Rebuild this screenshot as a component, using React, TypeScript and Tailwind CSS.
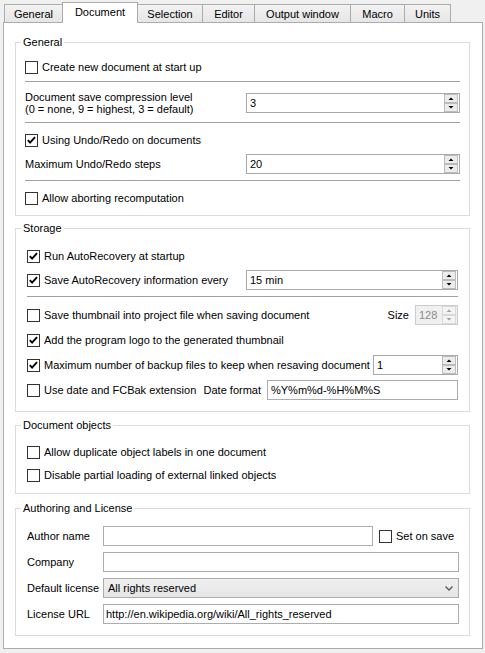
import React from 'react';

type CB = { checked?: boolean };
const Check = ({ checked }: CB) => (
  <span className="w-[13px] h-[13px] border border-[#333333] bg-white flex items-center justify-center shrink-0">
    {checked && (
      <svg width="11" height="11" viewBox="0 0 11 11">
        <path d="M1.8 5.2 L4.1 7.6 L9 2.2" fill="none" stroke="#000" strokeWidth="1.9" />
      </svg>
    )}
  </span>
);

const CheckRow = ({ label, checked, className = '' }: { label: string; checked?: boolean; className?: string }) => (
  <div className={'flex items-center gap-[4px] h-[20px] ' + className}>
    <Check checked={checked} />
    <span className="whitespace-nowrap">{label}</span>
  </div>
);

const SpinButtons = ({ disabled }: { disabled?: boolean }) => {
  const fill = disabled ? '#f4f4f4' : '#ececec';
  const stroke = disabled ? '#d9d9d9' : '#bcbcbc';
  const arrow = disabled ? '#a0a0a0' : '#000';
  return (
    <svg width="14" height="18" viewBox="0 0 14 18" className="shrink-0">
      <rect x="0.5" y="0.5" width="13" height="8" fill={fill} stroke={stroke} />
      <rect x="0.5" y="9.5" width="13" height="8" fill={fill} stroke={stroke} />
      <polygon points="4.5,6 9.5,6 7,3.5" fill={arrow} />
      <polygon points="4.5,12 9.5,12 7,14.5" fill={arrow} />
    </svg>
  );
};

const Spin = ({ value, className = '', disabled }: { value: string; className?: string; disabled?: boolean }) => (
  <div
    className={
      'h-[20px] border flex items-center pl-[3px] pr-[1px] shrink-0 ' +
      (disabled ? 'border-[#cccccc] bg-[#f0f0f0] text-[#8a8a8a] ' : 'border-[#a9a9a9] bg-white ') +
      className
    }
  >
    <span className="flex-1">{value}</span>
    <SpinButtons disabled={disabled} />
  </div>
);

const Input = ({ value = '', className = '' }: { value?: string; className?: string }) => (
  <div className={'h-[20px] border border-[#abadb3] bg-white flex items-center pl-[2px] whitespace-nowrap ' + className}>
    {value}
  </div>
);

const Sep = ({ className = '' }: { className?: string }) => <div className={'h-px bg-[#a0a0a0] ' + className} />;

const Group = ({ title, className = '', children }: { title: string; className?: string; children: React.ReactNode }) => (
  <div className={'relative border border-[#dcdcdc] flex flex-col shrink-0 ' + className}>
    <span className="absolute -top-[7px] left-[5px] px-[2px] bg-white leading-[13px]">{title}</span>
    {children}
  </div>
);

const tabs = [
  { label: 'General', w: 'w-[59px]' },
  { label: 'Document', w: 'w-[76px]', active: true },
  { label: 'Selection', w: 'w-[66px]' },
  { label: 'Editor', w: 'w-[53px]' },
  { label: 'Output window', w: 'w-[97px]' },
  { label: 'Macro', w: 'w-[55px]' },
  { label: 'Units', w: 'w-[47px]' },
];

export default function App() {
  return (
    <div className="w-[485px] h-[653px] bg-[#f0f0f0] text-black text-[11px] leading-[13px] font-['Liberation_Sans',Arial,sans-serif] overflow-hidden">
      <div className="flex items-end h-[22px] pl-[4px]">
        {tabs.map((t, i) =>
          t.active ? (
            <div
              key={t.label}
              className={'relative z-10 -ml-px mb-[-1px] h-[21px] bg-white border-x border-t border-[#acacac] flex items-center justify-center pb-[1px] ' + t.w}
            >
              {t.label}
            </div>
          ) : (
            <div
              key={t.label}
              className={
                'h-[18px] bg-gradient-to-b from-[#f2f2f2] to-[#e6e6e6] border-x border-t border-[#acacac] flex items-center justify-center pt-[2px] ' +
                (i > 0 ? '-ml-px ' : '') +
                t.w
              }
            >
              {t.label}
            </div>
          )
        )}
      </div>

      <div className="ml-[3px] w-[480px] h-[627px] border border-[#acacac] bg-white pt-[19px] pl-[11px] pr-[12px] flex flex-col">
        <Group title="General" className="h-[174px] pt-[14px] px-[9px]">
          <CheckRow label="Create new document at start up" />
          <Sep className="mt-[4px]" />
          <div className="flex items-start h-[40px]">
            <div className="mt-[9px] leading-[12px] flex-1">
              <div>Document save compression level</div>
              <div>(0 = none, 9 = highest, 3 = default)</div>
            </div>
            <Spin value="3" className="w-[214px] mt-[11px]" />
          </div>
          <Sep />
          <CheckRow label="Using Undo/Redo on documents" checked className="mt-[7px]" />
          <div className="flex items-center h-[20px] mt-[4px]">
            <span className="flex-1">Maximum Undo/Redo steps</span>
            <Spin value="20" className="w-[214px]" />
          </div>
          <Sep className="mt-[6px]" />
          <CheckRow label="Allow aborting recomputation" className="mt-[7px]" />
        </Group>

        <Group title="Storage" className="h-[184px] mt-[12px] pt-[17px] px-[11px]">
          <CheckRow label="Run AutoRecovery at startup" checked />
          <div className="flex items-center h-[20px] mt-[4px]">
            <CheckRow label="Save AutoRecovery information every" checked className="flex-1" />
            <Spin value="15 min" className="w-[212px]" />
          </div>
          <Sep className="mt-[6px]" />
          <div className="flex items-center h-[20px] mt-[8px]">
            <CheckRow label="Save thumbnail into project file when saving document" className="flex-1" />
            <span className="mr-[6px]">Size</span>
            <Spin value="128" disabled className="w-[43px] h-[19px]" />
          </div>
          <CheckRow label="Add the program logo to the generated thumbnail" checked className="mt-[5px]" />
          <div className="flex items-center h-[20px] mt-[5px]">
            <CheckRow label="Maximum number of backup files to keep when resaving document" checked className="flex-1" />
            <Spin value="1" className="w-[85px] h-[18px]" />
          </div>
          <div className="flex items-center h-[20px] mt-[5px]">
            <CheckRow label="Use date and FCBak extension" className="flex-1" />
            <span className="mr-[6px]">Date format</span>
            <Input value="%Y%m%d-%H%M%S" className="w-[191px] h-[19px] pl-[3px]" />
          </div>
        </Group>

        <Group title="Document objects" className="h-[69px] mt-[13px] pt-[16px] px-[11px]">
          <CheckRow label="Allow duplicate object labels in one document" />
          <CheckRow label="Disable partial loading of external linked objects" className="mt-[3px]" />
        </Group>

        <Group title="Authoring and License" className="h-[128px] mt-[14px] pt-[17px] px-[11px] pr-[10px]">
          <div className="flex items-center h-[20px]">
            <span className="w-[76px] shrink-0">Author name</span>
            <Input className="w-[270px] h-[19px]" />
            <CheckRow label="Set on save" className="ml-[6px]" />
          </div>
          <div className="flex items-center h-[20px] mt-[6px]">
            <span className="w-[76px] shrink-0">Company</span>
            <Input className="flex-1" />
          </div>
          <div className="flex items-center h-[20px] mt-[6px]">
            <span className="w-[76px] shrink-0">Default license</span>
            <div className="flex-1 h-[20px] border border-[#acacac] bg-gradient-to-b from-[#f0f0f0] to-[#e5e5e5] flex items-center pl-[4px] pr-[5px]">
              <span className="flex-1">All rights reserved</span>
              <svg width="8" height="5" viewBox="0 0 8 5">
                <polyline points="0.5,0.5 4,4 7.5,0.5" fill="none" stroke="#555" strokeWidth="1.3" />
              </svg>
            </div>
          </div>
          <div className="flex items-center h-[20px] mt-[6px]">
            <span className="w-[76px] shrink-0">License URL</span>
            <Input value="http://en.wikipedia.org/wiki/All_rights_reserved" className="flex-1" />
          </div>
        </Group>
      </div>
    </div>
  );
}
